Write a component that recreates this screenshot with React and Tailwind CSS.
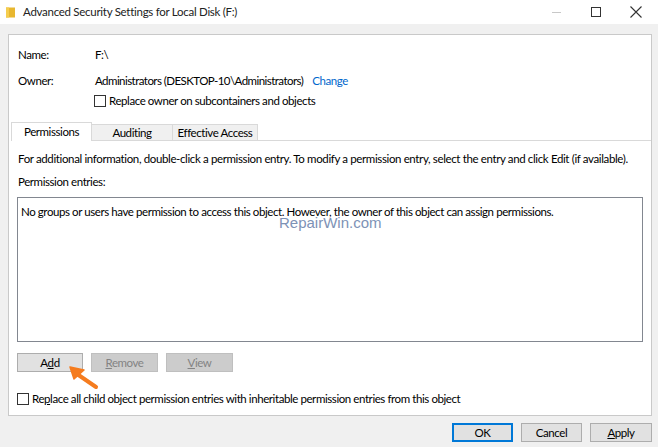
import React from 'react';

const font = { fontFamily: 'Lato, "Noto Sans", sans-serif' };

function FolderIcon() {
  return (
    <svg width="9" height="11" viewBox="0 0 9 11">
      <rect x="0" y="0.5" width="9" height="10" fill="#e8b730" />
      <rect x="0" y="0.5" width="3" height="10" fill="#f5cd4e" />
    </svg>
  );
}

function WinButton({ children, disabled, primary, underline, className = '' }) {
  const base = disabled
    ? 'bg-[#cccccc] border-[#bfbfbf] text-[#838383]'
    : primary
      ? 'bg-[#e1e1e1] border-[#0078d7] text-black'
      : 'bg-[#e1e1e1] border-[#adadad] text-black';
  return (
    <div className={`flex items-center justify-center border text-[11.5px] leading-none ${base} ${className}`}>
      {underline ? (
        <span>
          {underline[0]}
          <span className="underline">{underline[1]}</span>
          {underline[2]}
        </span>
      ) : (
        children
      )}
    </div>
  );
}

function Checkbox() {
  return <div className="w-[12px] h-[12px] border border-[#333333] bg-white shrink-0" />;
}

export default function App() {
  return (
    <div
      className="w-[658px] h-[447px] bg-[#f0f0f0] relative overflow-hidden text-[11.5px] tracking-[-0.42px] text-black"
      style={font}
    >
      {/* Title bar */}
      <div className="h-[24px] bg-white flex items-center">
        <div className="pl-[6px] pr-[8px] flex items-center">
          <FolderIcon />
        </div>
        <span className="text-[11.5px] tracking-[-0.28px] text-[#222]">Advanced Security Settings for Local Disk (F:)</span>
        <div className="ml-auto flex items-center h-full">
          <div className="w-[40px] flex justify-center">
            <div className="w-[9px] h-px bg-[#c8c8c8]" />
          </div>
          <div className="w-[40px] flex justify-center">
            <div className="w-[10px] h-[10px] border border-[#333]" />
          </div>
          <div className="w-[42px] flex justify-center pr-[2px]">
            <svg width="12" height="12" viewBox="0 0 12 12">
              <path d="M0.5 0.5 L11.5 11.5 M11.5 0.5 L0.5 11.5" stroke="#333" strokeWidth="1.1" />
            </svg>
          </div>
        </div>
      </div>

      {/* Main panel */}
      <div className="px-[8px] pt-[10px]">
        <div className="w-[644px] h-[382px] bg-white border border-[#c9c9c9] flex flex-col">
          <div className="pl-[9px] pt-[12px]">
            <div className="flex items-center h-[16px]">
              <span className="w-[77px]">Name:</span>
              <span>F:\</span>
            </div>
            <div className="flex items-center h-[16px] mt-[10px]">
              <span className="w-[77px]">Owner:</span>
              <span className="tracking-[-0.55px]">Administrators (DESKTOP-10\Administrators)</span>
              <span className="ml-[9px] text-[#0066cc]">Change</span>
            </div>
            <div className="flex items-center h-[16px] mt-[4px] pl-[76px] gap-[3px]">
              <Checkbox />
              <span>Replace owner on subcontainers and objects</span>
            </div>
          </div>

          {/* Tabs */}
          <div className="flex items-end h-[20px] mt-[12px] pl-[2px]">
            <div className="w-[81px] h-[19px] bg-white border border-b-0 border-[#d9d9d9] flex items-center justify-center">
              Permissions
            </div>
            <div className="w-[81px] h-[17px] bg-[#f0f0f0] border border-l-0 border-[#d9d9d9] flex items-center justify-center">
              Auditing
            </div>
            <div className="w-[85px] h-[17px] bg-[#f0f0f0] border border-l-0 border-[#d9d9d9] flex items-center justify-center">
              Effective Access
            </div>
            <div className="flex-1 border-b border-[#d9d9d9]" />
          </div>

          <div className="pl-[9px] pr-[10px] flex flex-col flex-1">
            <div className="h-[16px] mt-[10px] flex items-center whitespace-nowrap tracking-[-0.37px]">
              For additional information, double-click a permission entry. To modify a permission entry, select the entry and click Edit (if available).
            </div>
            <div className="h-[16px] mt-[7px] flex items-center">Permission entries:</div>
            <div className="relative -ml-[1px] w-[626px] h-[145px] mt-[7px] border border-[#828790] bg-white">
              <div className="pl-[3px] pt-[5px] whitespace-nowrap">
                No groups or users have permission to access this object. However, the owner of this object can assign permissions.
              </div>
              <div
                className="absolute left-[261px] top-[17px] text-[15px] tracking-normal text-[#7d92b6] leading-none"
                style={{ fontFamily: '"Liberation Sans", Arial, sans-serif' }}
              >
                RepairWin.com
              </div>
            </div>
            <div className="flex gap-[8px] mt-[11px] -ml-[1px]">
              <WinButton className="w-[66px] h-[19px]" underline={['A', 'd', 'd']} />
              <WinButton disabled className="w-[67px] h-[19px]" underline={['', 'R', 'emove']} />
              <WinButton disabled className="w-[67px] h-[19px]" underline={['', 'V', 'iew']} />
            </div>
            <div className="flex items-center gap-[3px] mt-[20px] -ml-[1px] h-[14px]">
              <Checkbox />
              <span>
                Re<span className="underline">p</span>lace all child object permission entries with inheritable permission entries from this object
              </span>
            </div>
          </div>
        </div>
      </div>

      {/* Bottom buttons */}
      <div className="flex justify-end gap-[8px] pr-[6px] mt-[7px]">
        <WinButton primary className="w-[61px] h-[19px] border-[2px]">OK</WinButton>
        <WinButton className="w-[61px] h-[19px]">Cancel</WinButton>
        <WinButton className="w-[62px] h-[19px]" underline={['', 'A', 'pply']} />
      </div>

      {/* Orange pointer arrow */}
      <svg className="absolute left-[62px] top-[360px]" width="40" height="32" viewBox="0 0 40 32">
        <path d="M34 27 L15 14" stroke="#f57c1f" strokeWidth="4" strokeLinecap="round" />
        <path d="M8 7 L22 10 L12 19 Z" fill="#f57c1f" stroke="#f57c1f" strokeWidth="1.5" strokeLinejoin="round" />
      </svg>
    </div>
  );
}
